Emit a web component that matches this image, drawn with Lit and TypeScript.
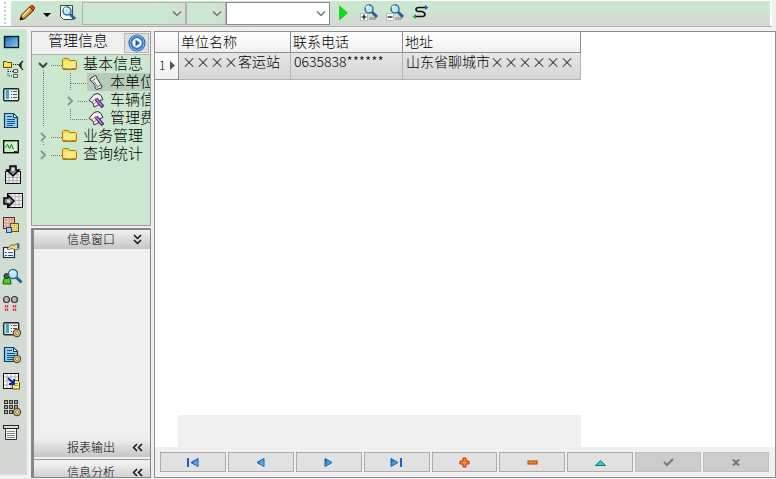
import { LitElement, html, svg, css, nothing, SVGTemplateResult } from "lit";
import { customElement } from "lit/decorators.js";
import { classMap } from "lit/directives/class-map.js";

const lens = (x: number, y: number, r: number) => svg`
  <path d="M${x + r - 1} ${y + r - 1} l5 5" stroke="#2a5f9e" stroke-width="3"/>
  <circle cx=${x} cy=${y} r=${r} fill="#b9ecf8" stroke="#2b6b8e" stroke-width="1.4"/>
  <path d="M${x - 3} ${y - 1} a3 3 0 0 1 3 -2" fill="none" stroke="#fff" stroke-width="1.4"/>`;

const gear = (x: number, y: number) => svg`
  <circle cx=${x} cy=${y} r="3.6" fill="#e5cd8b" stroke="#5b481c" stroke-width="1.2"/>
  <circle cx=${x} cy=${y} r="1.5" fill="#fff6d2" stroke="#7b642b" stroke-width=".8"/>`;

const cells = (x: number, y: number, w: number, h: number, fill: string, line: string, edge: string) => svg`
  <rect x=${x + 0.5} y=${y + 0.5} width=${w - 1} height=${h - 1} fill=${fill}/>
  <path d="M${x + w / 4} ${y}v${h}M${x + w / 2} ${y}v${h}M${x + (w * 3) / 4} ${y}v${h}M${x} ${y + h / 4}h${w}M${x} ${y + h / 2}h${w}M${x} ${y + (h * 3) / 4}h${w}" stroke=${line}/>
  <rect x=${x + 0.5} y=${y + 0.5} width=${w - 1} height=${h - 1} fill="none" stroke=${edge}/>`;

const form = svg`
  <rect x="3.7" y="7.7" width="15" height="12" rx="1" fill="#e9eeee" stroke="#20282c" stroke-width="1.4"/>
  <rect x="5" y="9" width="4" height="9" fill="#4ba3c7"/><path d="M5.5 9v9" stroke="#a9e2f2"/>
  <path d="M11 10.5h1M11 13.5h1M11 16.5h1M13 10.5h4M13 13.5h4M13 16.5h4" stroke="#555"/>`;

const page = svg`
  <path d="M4.5 6.5h9l4 4v10h-13z" fill="#8fd0ee" stroke="#10375c" stroke-width="1.2"/>
  <path d="M13.5 6.5v4h4z" fill="#fff" stroke="#10375c"/>
  <path d="M7 9.5h5M7 12.5h8M7 14.5h8M7 16.5h8M7 18.5h6" stroke="#174f86"/>`;

const tools: { name: string; art: SVGTemplateResult }[] = [
  { name: "窗口", art: svg`<rect x="4.5" y="7.5" width="14" height="11" fill="url(#blue)" stroke="#0b1f33" stroke-width="1.4"/>` },
  { name: "树", art: svg`
      <path d="M3.5 12.5v-6h3l1 1h4v5z" fill="#ffe352" stroke="#5a4700"/>
      <path d="M8 14v7h5M8 16.5h5M13 9.5h6" fill="none" stroke="#222" stroke-dasharray="1 1"/>
      <path d="M13.5 14.5h4v3h-4zM13.5 19.5h4v3h-4z" fill="#eee" stroke="#555"/>
      <path d="M23 6l-4 4l4 5M21 8v5" fill="none" stroke="#111" stroke-width="1.2"/>` },
  { name: "表单", art: form },
  { name: "文档", art: page },
  { name: "曲线", art: svg`
      <rect x="3.7" y="7.7" width="14.6" height="12" fill="#c4f2c0" stroke="#111" stroke-width="1.4"/>
      <path d="M5.5 14.5l2-3l2 4l2-4l2 5" fill="none" stroke="#107a18" stroke-width="1"/>
      <path d="M15.5 9v10" stroke="#edf3e7" stroke-width="2"/><path d="M14 18.5h3" stroke="#222"/>` },
  { name: "导入", art: svg`
      ${cells(5, 12, 16, 13, "#efedf1", "#b5b1b9", "#111")}
      <path d="M10 7h6v4h3l-6 6l-6-6h3z" fill="#888" stroke="#000" stroke-width="1.5"/>
      <rect x="11.5" y="9" width="3" height="3" fill="#ddd"/>` },
  { name: "导出", art: svg`
      ${cells(7, 8, 16, 15, "#efedf1", "#b5b1b9", "#111")}
      <path d="M4 13h4v-3l6 6l-6 6v-3h-4z" fill="#888" stroke="#000" stroke-width="1.5"/>
      <rect x="7" y="14.5" width="3" height="3" fill="#ddd"/>` },
  { name: "表格", art: svg`
      ${cells(3, 6, 12, 12, "#ffd9cb", "#d18f85", "#622")}
      ${cells(10, 12, 9, 9, "#fff3a8", "#d8bd62", "#6b5714")}
      ${cells(6, 16, 6, 6, "#dcebfd", "#a9c1e3", "#244a80")}` },
  { name: "属性", art: svg`
      <rect x="3.5" y="10.5" width="11" height="10" fill="#fff" stroke="#1c2a4a" stroke-width="1.2"/>
      <path d="M5 15.5h2M8 15.5h5M5 18.5h2M8 18.5h5" stroke="#2747d1"/>
      <path d="M7 12l4-4h4l1-1h3v5l-5 1l-2-2l-3 2z" fill="#efd68a" stroke="#5d4c1d" stroke-width=".8"/>
      <path d="M18 6v5" stroke="#3a7d93" stroke-width="2"/>` },
  { name: "查找人员", art: svg`
      <path d="M3 21q0-7 4-7t4 7z" fill="#52c51e" stroke="#1c5a09"/>
      <circle cx="6.5" cy="13" r="2.5" fill="#555" stroke="#222"/>${lens(13, 11, 4.5)}` },
  { name: "指标", art: svg`
      <circle cx="6.5" cy="10.5" r="3" fill="#b9bbbb" stroke="#333" stroke-width="1.2"/>
      <circle cx="14.5" cy="10.5" r="3" fill="#b9bbbb" stroke="#333" stroke-width="1.2"/>
      <path d="M5.5 16v6M7.5 16v6M13.5 16v6M15.5 16v6" stroke="#e2304c" stroke-width="1.4" stroke-dasharray="2.500 1"/>` },
  { name: "表单设置", art: svg`${form}${gear(17, 18)}` },
  { name: "文档设置", art: svg`${page}${gear(17, 18)}` },
  { name: "表格备注", art: svg`
      ${cells(3, 6, 16, 16, "#fff", "#aab", "#111")}
      <path d="M12.5 13.5h5l2 2v6.5h-7z" fill="#fff08a" stroke="#5f5200"/>
      <path d="M14 16.5h4M14 18.5h4" stroke="#b29c22"/>
      <path d="M8 11l5 5M14 12v5h-5" fill="none" stroke="#0c1fb5" stroke-width="1.8"/>` },
  { name: "矩阵设置", art: svg`
      ${[0, 1, 2].map((r) => [0, 1, 2].map((c) => svg`<rect x=${4.5 + c * 5} y=${7.5 + r * 5} width="3" height="3" fill="#aaa" stroke="#333"/>`))}
      ${gear(17, 19)}` },
  { name: "报表", art: svg`
      <path d="M5.5 8.5h11v12h-11z" fill="#f7f7f7" stroke="#333"/>
      <rect x="3.5" y="6.5" width="15" height="3" fill="#dedede" stroke="#222"/>
      <path d="M7 12.5h8M7 14.5h8M7 16.5h8M7 18.5h8" stroke="#888"/>` },
];

interface Node {
  label: string;
  level: 0 | 1;
  arrow?: "open" | "closed";
  icon: "folder" | "scroll" | "tagged";
  last?: boolean;
  selected?: boolean;
}

const nodes: Node[] = [
  { label: "基本信息", level: 0, arrow: "open", icon: "folder" },
  { label: "本单位", level: 1, icon: "scroll", selected: true },
  { label: "车辆信", level: 1, arrow: "closed", icon: "tagged" },
  { label: "管理费", level: 1, icon: "tagged", last: true },
  { label: "业务管理", level: 0, arrow: "closed", icon: "folder" },
  { label: "查询统计", level: 0, arrow: "closed", icon: "folder", last: true },
];

const nodeIcons = {
  folder: svg`
    <path d="M.5 12.500v-9l1-1h5l1 2h6l1 1v7q-6 1-14 0z" fill="#f7d44b" stroke="#ad7d14"/>
    <path d="M1.500 5.500h12v6q-6 1.500-12 0z" fill="#ffe981"/><path d="M1 13.500h13" stroke="#9b7a24"/>`,
  scroll: svg`
    <path d="M2 5l5-3.500q2 0 2 3l3.500 5.500q2.500 2 1 4l-5 1.500q-2-.5-1.500-4l-3-4q-2 0-2-2.500z" fill="#eef1f3" stroke="#333"/>
    <path d="M4.500 6.500q2 0 2.500-2M8 14.500q2-3 5-3.500M6 7.500l3.500 5" fill="none" stroke="#666"/>`,
  tagged: svg`
    <path d="M1 8.500l5-6l4-1l3 2l2 4l-3 1l-1 4l-5 2.500l-1-4z" fill="#f3f0f5" stroke="#333"/>
    <path d="M4 10l4-4M6 12l3-3" stroke="#999"/>
    <path d="M8 7l7 8" stroke="#4d2070" stroke-width="3.600"/><path d="M8.500 7.500l5.500 6.500" stroke="#c284e8" stroke-width="1.400"/>`,
};

const navItems: { name: string; art: SVGTemplateResult; off?: boolean }[] = [
  { name: "首条", art: svg`<rect x="3" y="4" width="2" height="9" fill="#1666c9"/><path d="M14 4.500v8l-7-4z" fill="url(#blue)" stroke="#0f5fc0"/>` },
  { name: "上一条", art: svg`<path d="M12 4.500v8l-7-4z" fill="url(#blue)" stroke="#0f5fc0"/>` },
  { name: "下一条", art: svg`<path d="M5 4.500v8l7-4z" fill="url(#blue)" stroke="#0f5fc0"/>` },
  { name: "末条", art: svg`<rect x="12" y="4" width="2" height="9" fill="#1666c9"/><path d="M3 4.500v8l7-4z" fill="url(#blue)" stroke="#0f5fc0"/>` },
  { name: "插入", art: svg`<path d="M7 4h3v3h3v3h-3v3h-3v-3h-3v-3h3z" fill="#ff8a2a" stroke="#b93205"/>` },
  { name: "删除", art: svg`<rect x="4" y="7" width="9" height="3" fill="#ff8a2a" stroke="#b93205"/>` },
  { name: "编辑", art: svg`<path d="M3.500 11.500h10l-5-5z" fill="#3fc4c8" stroke="#08797f"/>` },
  { name: "提交", off: true, art: svg`<path d="M4 8l3 3l6-6" fill="none" stroke="#777" stroke-width="2"/>` },
  { name: "取消", off: true, art: svg`<path d="M5 5.500l6 6M11 5.500l-6 6" fill="none" stroke="#777" stroke-width="2"/>` },
];

const blue = svg`<defs><linearGradient id="blue" x1="0" y1="0" x2="1" y2="1">
  <stop offset="0" stop-color="#1762b0"/><stop offset="1" stop-color="#8ed3fb"/></linearGradient></defs>`;

const resets = css`
  * { box-sizing: border-box; }
  button {
    appearance: none; border: 0; padding: 0; margin: 0; background: none;
    font: inherit; color: inherit; display: flex; align-items: center; justify-content: center;
  }
  svg { display: block; flex: none; overflow: visible; }
`;

@customElement("top-toolbar")
class TopToolbar extends LitElement {
  static styles = [resets, css`
    :host {
      display: flex; align-items: center; height: 26px; flex: none; margin-right: 4px;
      background: #fff; border-bottom: 1px solid #aeaeae; padding-right: 2px;
    }
    .grip { width: 11px; height: 25px; flex: none; display: flex; align-items: center; }
    .grip::after { content: ""; margin-left: 4px; height: 22px; border-left: 2px dotted #ccc; }
    .bar {
      flex: 1; height: 25px; display: flex; align-items: center; padding-left: 6px;
      background: linear-gradient(#cbe7cf, #cbe7cf 30%, #d5d8d5);
    }
    .pencil { width: 20px; }
    .caret { width: 20px; }
    .preview { width: 20px; margin-right: 5px; }
    .pick { position: relative; display: flex; height: 23px; flex: none; }
    .pick svg { position: absolute; right: 4px; top: 9px; pointer-events: none; }
    .pick select {
      appearance: none; width: 100%; height: 100%; border: 1px solid #b0b4b0; border-radius: 0;
      background: linear-gradient(90deg, #cbe7cf, #cbe7cf 80%, #d4ddd5);
      font: 12px "Noto Sans CJK SC", sans-serif; padding: 0 18px 0 4px;
    }
    .wide { width: 104px; }
    .slim { width: 40px; }
    .entry { width: 104px; }
    .pick.entry select { background: #fff; border-color: #8a8a8a; }
    .run { width: 26px; }
    .tool { width: 26px; }
  `];

  private pick(cls: string, label: string) {
    return html`<div class="pick ${cls}">
      <select aria-label=${label}></select>
      <svg width="10" height="6"><path d="M1 .5l4 4l4-4" fill="none" stroke="#666" stroke-width="1.200"/></svg>
    </div>`;
  }

  render() {
    return html`
      <div class="grip"></div>
      <div class="bar">
        <button class="pencil" aria-label="编辑"><svg width="18" height="18">
          <path d="M2 16l1.500-5l8.500-8.500l4 3.500l-9 8.500z" fill="#e9a63a" stroke="#3a2208"/>
          <path d="M4.500 12l8-8" stroke="#fbe38c" stroke-width="1.500"/><path d="M6.500 14l8-8" stroke="#9b6415"/>
          <path d="M11.500 3l2-1.500q3 0 3 3l-1.500 2z" fill="#f0502f" stroke="#6e1607"/>
          <path d="M2 16l1-3.500l2.500 2.500z" fill="#111"/></svg></button>
        <button class="caret" aria-label="更多"><svg width="8" height="8"><path d="M0 4h8l-4 4z" fill="#000"/></svg></button>
        <button class="preview" aria-label="预览"><svg width="18" height="18">
          <path d="M2.500 1.500h12v14h-9l-3-3z" fill="#f4f6f6" stroke="#444"/>${lens(9, 7, 4)}</svg></button>
        ${this.pick("wide", "字段")}${this.pick("slim", "条件")}${this.pick("entry", "内容")}
        <button class="run" aria-label="执行"><svg width="9" height="14"><path d="M.5 0v14l8-7z" fill="#0be30b" stroke="#0a9e2a" stroke-width=".5"/></svg></button>
        <button class="tool" aria-label="放大"><svg width="18" height="18">
          <path d="M9 14.500h7" stroke="#aaa" stroke-width="3"/>${lens(9, 5, 4)}
          <rect x=".5" y="9.500" width="7" height="7" fill="#fff" stroke="#bbb"/><path d="M1.500 13h5M4 10.500v5" stroke="#000" stroke-width="1.200"/></svg></button>
        <button class="tool" aria-label="缩小"><svg width="18" height="18">
          <path d="M9 14.500h7" stroke="#aaa" stroke-width="3"/>${lens(9, 5, 4)}
          <rect x=".5" y="9.500" width="7" height="7" fill="#fff" stroke="#bbb"/><path d="M1.500 13h5" stroke="#000" stroke-width="1.200"/></svg></button>
        <button class="tool" aria-label="刷新"><svg width="18" height="18">
          <path d="M14 3.500h-7q-3 0-3 2t3 2h3q3 1 3 3t-3 2h-7" fill="none" stroke="#111" stroke-width="1.600"/>
          <path d="M13 1l3.500 2.500l-3.500 2.500z" fill="#2a50e8"/><path d="M4 10l-3.500 2.500l3.500 2.500z" fill="#23a52c"/></svg></button>
      </div>`;
  }
}

@customElement("tool-strip")
class ToolStrip extends LitElement {
  static styles = [resets, css`
    :host {
      display: flex; flex-direction: column; width: 27px; flex: none; overflow: hidden; margin-bottom: 4px;
      background: linear-gradient(#cae7cf, #d0ddd2 50%, #d5d8d5);
    }
    button { height: 26px; flex: none; }
  `];

  render() {
    return tools.map((t) => html`<button aria-label=${t.name}><svg width="27" height="26">${blue}${t.art}</svg></button>`);
  }
}

@customElement("side-panel")
class SidePanel extends LitElement {
  static styles = [resets, css`
    :host {
      display: flex; flex-direction: column; width: 120px; flex: none; overflow: hidden;
      font: 300 15px/16px "Noto Sans CJK SC", sans-serif; color: #000; margin: 2px 0 1px;
    }
    .manage {
      display: flex; flex-direction: column; height: 195px; flex: none; overflow: hidden;
      border: 1px solid #9b9b9b; background: #cbe7cf; margin-bottom: 2px;
    }
    .title {
      display: flex; align-items: center; height: 23px; flex: none; padding: 0 1px 0 16px;
      background: #f0f0f0; border-bottom: 1px solid #b4b4b4;
    }
    .title h2 { flex: 1; margin: 0; font: inherit; white-space: nowrap; padding-bottom: 6px; }
    .go { width: 25px; height: 20px; background: #dedede; border: 1px solid #b5b5b5; }
    .node { display: flex; height: 18px; width: 100%; padding-left: 1px; justify-content: flex-start; white-space: nowrap; }
    .body { display: flex; align-items: center; height: 18px; flex: 1; gap: 5px; }
    .label { padding-bottom: 2px; }
    .leaf { gap: 6px; padding-left: 1px; }
    .chosen { background: #b4ccb8; }
    .info {
      display: flex; flex-direction: column; flex: 1; min-height: 0; overflow: hidden;
      border: solid #858585; border-width: 2px 1px 1px 3px; background: #f0f0f0;
      font-size: 12px;
    }
    .fold {
      display: flex; align-items: center; justify-content: flex-start; height: 19px; width: 100%; flex: none; padding: 0 8px 0 33px;
      background: linear-gradient(#f0f0f0, #c6c6c6); white-space: nowrap;
    }
    .fold span { flex: 1; text-align: left; padding-bottom: 2px; }
    .fill { flex: 1; }
    .tail { flex: none; height: 18px; overflow: hidden; border-top: 1px solid #999; margin: 2px 0 0; padding-top: 3px; }
  `];

  private guides(n: Node) {
    const dots = "1 1";
    const chevron = n.arrow === "open"
      ? svg`<path d="M6 8l4 4l4-4" fill="none" stroke="#444" stroke-width="2"/>`
      : n.arrow === "closed" ? svg`<path d="M8 6l4 4l-4 4" fill="none" stroke="#8a9a8c" stroke-width="2"/>` : nothing;
    if (n.level === 0) {
      return html`<svg width="29" height="18">
        <path d="M18 10.5h11" stroke="#777" stroke-dasharray=${dots}/>
        ${n.last ? nothing : svg`<path d="M10.5 15v3" stroke="#777" stroke-dasharray=${dots}/>`}${chevron}</svg>`;
    }
    return html`<svg width="27" height="18"><path d="M10.5 0v18" stroke="#777" stroke-dasharray=${dots}/></svg>
      <svg width="27" height="18">
        <path d=${n.arrow ? "M18 10.5h9" : n.last ? "M10.5 0v10.5h16.5" : "M10.5 0v18M11 10.5h16"} fill="none" stroke="#777" stroke-dasharray=${dots}/>${chevron}</svg>`;
  }

  private fold(label: string, open = false) {
    return html`<button class="fold" aria-expanded=${open}><span>${label}</span>
      <svg width="9" height="9"><path d=${open ? "M1 0l3.5 3.5l3.5-3.5M1 5l3.5 3.5l3.5-3.5" : "M4 1l-3.5 3.5l3.5 3.5M9 1l-3.5 3.5l3.5 3.5"} fill="none" stroke="#111" stroke-width="1.500"/></svg>
    </button>`;
  }

  render() {
    return html`
      <section class="manage">
        <div class="title"><h2>管理信息</h2>
          <button class="go" aria-label="展开"><svg width="18" height="18">
            <circle cx="9" cy="9" r="8" fill="#e8f2fb" stroke="#2366b4" stroke-width="1.200"/>
            <circle cx="9" cy="9" r="5.800" fill="#fff" stroke="#2e7cce" stroke-width="2.200"/>
            <path d="M7.5 5.5v7l4.5-3.5z" fill="#1560b4"/></svg></button>
        </div>
        <div role="tree">
          ${nodes.map((n) => html`<button class="node" role="treeitem">
            ${this.guides(n)}
            <div class=${classMap({ body: true, leaf: n.level === 1, chosen: !!n.selected })}>
              <svg width="16" height="16">${nodeIcons[n.icon]}</svg><span class="label">${n.label}</span>
            </div></button>`)}
        </div>
      </section>
      <section class="info">
        ${this.fold("信息窗口", true)}
        <div class="fill"></div>
        ${this.fold("报表输出")}
        <div class="tail">${this.fold("信息分析")}</div>
      </section>`;
  }
}

@customElement("record-grid")
class RecordGrid extends LitElement {
  static styles = [resets, css`
    :host {
      display: flex; flex-direction: column; flex: 1; min-width: 0; overflow: hidden; background: #fff;
      border: 1px solid #8f8f8f; margin: 2px 0 1px 3px; font: 300 14px/14px "Noto Sans CJK SC", sans-serif; color: #000;
    }
    table { border-collapse: separate; border-spacing: 0; table-layout: fixed; width: 426px; }
    .mark { width: 24px; }
    .name, .phone { width: 112px; }
    .place { width: 178px; }
    th, td {
      text-align: left; font-weight: 300; padding: 2px 2px 0; white-space: nowrap; vertical-align: top;
      border-right: 1px solid #8c8c8c; border-bottom: 1px solid #8c8c8c;
    }
    thead th { height: 21px; background: linear-gradient(#fff, #f0f0f0); }
    tbody td { height: 27px; background: linear-gradient(#e6e6e6, #d6d6d6); border-color: #b4b4b4; padding: 1px 3px 0; }
    tbody th { background: linear-gradient(#fff, #f0f0f0); vertical-align: middle; font-size: 12px; padding: 0 3px 2px 4px; }
    .num { display: flex; align-items: center; justify-content: space-between; }
    .fill { flex: 1; }
    .foot { height: 32px; width: 403px; margin-left: 23px; background: #f0f0f0; flex: none; }
    .nav { display: flex; gap: 2px; padding: 5px 6px 5px 5px; background: #f0f0f0; flex: none; }
    .nav button { flex: 1; height: 20px; background: #e1e1e1; border: 1px solid #adadad; }
    .nav button:disabled { background: #ccc; border-color: #bfbfbf; }
  `];

  render() {
    return html`
      <table>
        <colgroup><col class="mark"><col class="name"><col class="phone"><col class="place"></colgroup>
        <thead><tr><th></th><th scope="col">单位名称</th><th scope="col">联系电话</th><th scope="col">地址</th></tr></thead>
        <tbody><tr>
          <th scope="row"><div class="num">1<svg width="5" height="9"><path d="M0 0v9l5-4.5z" fill="#555"/></svg></div></th>
          <td>××××客运站</td><td>0635838******</td><td>山东省聊城市××××××</td>
        </tr></tbody>
      </table>
      <div class="fill"></div>
      <div class="foot"></div>
      <div class="nav">
        ${navItems.map((n) => html`<button aria-label=${n.name} ?disabled=${n.off}><svg width="17" height="17">${blue}${n.art}</svg></button>`)}
      </div>`;
  }
}

@customElement("app-root")
class AppRoot extends LitElement {
  static styles = css`
    :host { display: flex; flex-direction: column; height: 100vh; background: #f0f0f0; overflow: hidden; }
    .main { display: flex; flex: 1; min-height: 0; padding-top: 2px; }
    .gap { width: 4px; flex: none; }
  `;

  render() {
    return html`
      <top-toolbar></top-toolbar>
      <div class="main">
        <tool-strip></tool-strip>
        <div class="gap"></div>
        <side-panel></side-panel>
        <record-grid></record-grid>
      </div>`;
  }
}
